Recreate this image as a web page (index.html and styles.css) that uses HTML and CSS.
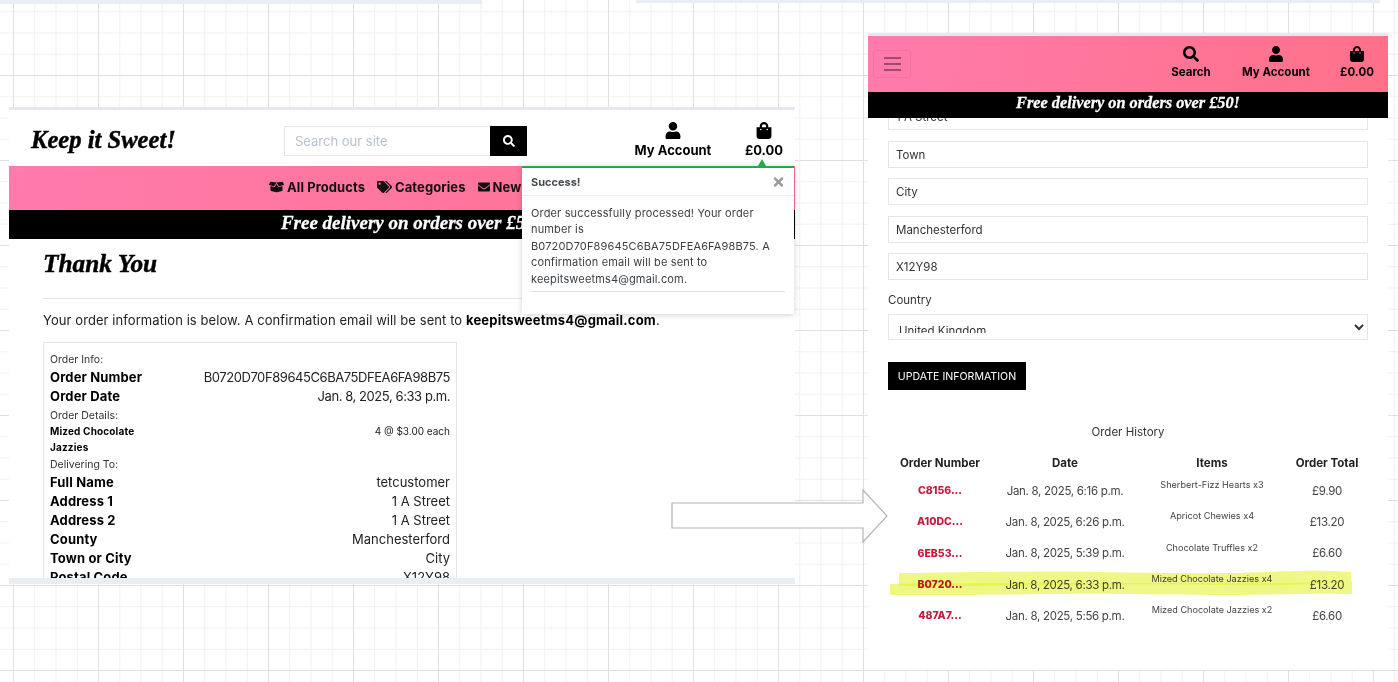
FILE: index.html
```html
<!DOCTYPE html>
<html lang="en">
<head>
<meta charset="utf-8">
<title>Keep it Sweet! order confirmation</title>
<link rel="stylesheet" href="styles.css">
</head>
<body>
<main class="canvas">
  <div class="strip strip-a"></div>
  <div class="strip strip-b"></div>

  <section class="window desktop">
    <header class="site-head">
      <div class="logo">Keep it Sweet!</div>
      <form class="search">
        <input class="search-input" placeholder="Search our site">
        <button class="search-btn" type="button"><svg viewBox="0 0 512 512"><path d="M505 442.7L405.3 343c-4.5-4.5-10.6-7-17-7H372c27.6-35.3 44-79.7 44-128C416 93.1 322.9 0 208 0S0 93.1 0 208s93.1 208 208 208c48.3 0 92.7-16.4 128-44v16.3c0 6.4 2.5 12.5 7 17l99.7 99.7c9.4 9.4 24.6 9.4 33.9 0l28.3-28.3c9.4-9.4 9.4-24.6.1-34zM208 336c-70.7 0-128-57.2-128-128 0-70.7 57.2-128 128-128 70.7 0 128 57.2 128 128 0 70.7-57.2 128-128 128z"/></svg></button>
      </form>
      <a class="head-link account"><svg viewBox="0 0 448 512"><path d="M224 256c70.7 0 128-57.3 128-128S294.7 0 224 0 96 57.3 96 128s57.3 128 128 128zm89.6 32h-16.7c-22.2 10.2-46.9 16-72.9 16s-50.6-5.8-72.9-16h-16.7C60.2 288 0 348.2 0 422.4V464c0 26.5 21.5 48 48 48h352c26.5 0 48-21.5 48-48v-41.6c0-74.2-60.2-134.4-134.4-134.4z"/></svg><span>My Account</span></a>
      <a class="head-link bag"><svg viewBox="0 0 448 512"><path d="M352 160v-32C352 57.42 294.579 0 224 0 153.42 0 96 57.42 96 128v32H0v272c0 44.183 35.817 80 80 80h288c44.183 0 80-35.817 80-80V160h-96zm-192-32c0-35.29 28.71-64 64-64s64 28.71 64 64v32H160v-32zm160 120c-13.255 0-24-10.745-24-24s10.745-24 24-24 24 10.745 24 24-10.745 24-24 24zm-192 0c-13.255 0-24-10.745-24-24s10.745-24 24-24 24 10.745 24 24-10.745 24-24 24z"/></svg><span>£0.00</span></a>
    </header>
    <nav class="main-nav">
      <a class="nav-item"><svg class="wide" viewBox="0 0 640 512"><path d="M425.7 256c-16.9 0-32.8-9-41.4-23.4L320 126l-64.2 106.6c-8.7 14.5-24.6 23.5-41.5 23.5-4.5 0-9-.6-13.3-1.9L64 215v178c0 14.7 10 27.5 24.2 31l216.2 54.1c10.2 2.5 20.9 2.5 31 0L551.8 424c14.2-3.6 24.2-16.4 24.2-31V215l-137 39.1c-4.3 1.3-8.8 1.9-13.3 1.9zm212.6-112.2L586.8 41c-3.1-6.2-9.8-9.8-16.7-8.9L320 64l91.7 152.1c3.8 6.3 11.4 9.3 18.5 7.3l197.9-56.5c9.9-2.9 14.7-13.9 10.2-23.1zM53.2 41L1.7 143.8c-4.6 9.2.3 20.2 10.1 23l197.9 56.5c7.1 2 14.7-1 18.5-7.3L320 64 69.8 32.1c-6.9-.8-13.5 2.7-16.6 8.9z"/></svg>All Products</a>
      <a class="nav-item"><svg class="wide" viewBox="0 0 640 512"><path d="M497.941 225.941L286.059 14.059A48 48 0 0 0 252.118 0H48C21.49 0 0 21.49 0 48v204.118a48 48 0 0 0 14.059 33.941l211.882 211.882c18.744 18.745 49.136 18.746 67.882 0l204.118-204.118c18.745-18.745 18.745-49.137 0-67.882zM112 160c-26.51 0-48-21.49-48-48s21.49-48 48-48 48 21.49 48 48-21.49 48-48 48zm513.941 133.823L421.823 497.941c-18.745 18.745-49.137 18.745-67.882 0l-.36-.36L527.64 323.522c16.999-16.999 26.36-39.6 26.36-63.64s-9.362-46.641-26.36-63.64L331.397 0h48.721a48 48 0 0 1 33.941 14.059l211.882 211.882c18.745 18.745 18.745 49.137 0 67.882z"/></svg>Categories</a>
      <a class="nav-item"><svg viewBox="0 0 512 512"><path d="M502.3 190.8c3.9-3.1 9.7-.2 9.7 4.7V400c0 26.5-21.5 48-48 48H48c-26.5 0-48-21.5-48-48V195.6c0-5 5.7-7.8 9.7-4.7 22.4 17.4 52.1 39.5 154.1 113.6 21.1 15.4 56.7 47.8 92.2 47.6 35.7.3 72-32.8 92.3-47.6 102-74.1 131.6-96.3 154-113.7zM256 320c23.2.4 56.6-29.2 73.4-41.4 132.7-96.3 142.8-104.7 173.4-128.7 5.8-4.5 9.2-11.5 9.2-18.9v-19c0-26.5-21.5-48-48-48H48C21.5 64 0 85.5 0 112v19c0 7.4 3.4 14.3 9.2 18.9 30.6 23.9 40.7 32.4 173.4 128.7 16.8 12.2 50.2 41.8 73.4 41.4z"/></svg>New</a>
    </nav>
    <div class="promo promo-desktop">Free delivery on orders over £50!</div>
    <div class="page">
      <h1 class="thanks">Thank You</h1>
      <hr class="rule">
      <p class="lead">Your order information is below. A confirmation email will be sent to <strong>keepitsweetms4@gmail.com</strong>.</p>
      <div class="receipt">
        <p class="r-label">Order Info:</p>
        <div class="r-row"><b>Order Number</b><span class="tight">B0720D70F89645C6BA75DFEA6FA98B75</span></div>
        <div class="r-row"><b>Order Date</b><span class="tight">Jan. 8, 2025, 6:33 p.m.</span></div>
        <p class="r-label">Order Details:</p>
        <div class="r-row r-small"><b>Mized Chocolate Jazzies</b><span>4 @ $3.00 each</span></div>
        <p class="r-label">Delivering To:</p>
        <div class="r-row"><b>Full Name</b><span>tetcustomer</span></div>
        <div class="r-row"><b>Address 1</b><span>1 A Street</span></div>
        <div class="r-row"><b>Address 2</b><span>1 A Street</span></div>
        <div class="r-row"><b>County</b><span>Manchesterford</span></div>
        <div class="r-row"><b>Town or City</b><span>City</span></div>
        <div class="r-row"><b>Postal Code</b><span>X12Y98</span></div>
      </div>
    </div>
    <div class="foot-band"></div>
  </section>

  <aside class="toast">
    <span class="toast-arrow"></span>
    <div class="toast-head"><strong>Success!</strong><svg viewBox="0 0 352 512"><path d="M242.72 256l100.07-100.07c12.28-12.28 12.28-32.19 0-44.48l-22.24-22.24c-12.28-12.28-32.19-12.28-44.48 0L176 189.28 75.93 89.21c-12.28-12.28-32.19-12.28-44.48 0L9.21 111.45c-12.28 12.28-12.28 32.19 0 44.48L109.28 256 9.21 356.07c-12.28 12.28-12.28 32.19 0 44.48l22.24 22.24c12.28 12.28 32.2 12.28 44.48 0L176 322.72l100.07 100.07c12.28 12.28 32.2 12.28 44.48 0l22.24-22.24c12.28-12.28 12.28-32.19 0-44.48L242.72 256z"/></svg></div>
    <div class="toast-body">
      <p>Order successfully processed! Your order number is B0720D70F89645C6BA75DFEA6FA98B75. A confirmation email will be sent to keepitsweetms4@gmail.com.</p>
      <hr class="toast-rule">
    </div>
  </aside>

  <section class="window mobile">
    <header class="m-head">
      <button class="burger" type="button"><i></i><i></i><i></i></button>
      <div class="m-links">
        <a class="m-link"><svg viewBox="0 0 512 512"><path d="M505 442.7L405.3 343c-4.5-4.5-10.6-7-17-7H372c27.6-35.3 44-79.7 44-128C416 93.1 322.9 0 208 0S0 93.1 0 208s93.1 208 208 208c48.3 0 92.7-16.4 128-44v16.3c0 6.4 2.5 12.5 7 17l99.7 99.7c9.4 9.4 24.6 9.4 33.9 0l28.3-28.3c9.4-9.4 9.4-24.6.1-34zM208 336c-70.7 0-128-57.2-128-128 0-70.7 57.2-128 128-128 70.7 0 128 57.2 128 128 0 70.7-57.2 128-128 128z"/></svg><span>Search</span></a>
        <a class="m-link"><svg viewBox="0 0 448 512"><path d="M224 256c70.7 0 128-57.3 128-128S294.7 0 224 0 96 57.3 96 128s57.3 128 128 128zm89.6 32h-16.7c-22.2 10.2-46.9 16-72.9 16s-50.6-5.8-72.9-16h-16.7C60.2 288 0 348.2 0 422.4V464c0 26.5 21.5 48 48 48h352c26.5 0 48-21.5 48-48v-41.6c0-74.2-60.2-134.4-134.4-134.4z"/></svg><span>My Account</span></a>
        <a class="m-link"><svg viewBox="0 0 448 512"><path d="M352 160v-32C352 57.42 294.579 0 224 0 153.42 0 96 57.42 96 128v32H0v272c0 44.183 35.817 80 80 80h288c44.183 0 80-35.817 80-80V160h-96zm-192-32c0-35.29 28.71-64 64-64s64 28.71 64 64v32H160v-32zm160 120c-13.255 0-24-10.745-24-24s10.745-24 24-24 24 10.745 24 24-10.745 24-24 24zm-192 0c-13.255 0-24-10.745-24-24s10.745-24 24-24 24 10.745 24 24-10.745 24-24 24z"/></svg><span>£0.00</span></a>
      </div>
    </header>
    <div class="promo promo-mobile">Free delivery on orders over £50!</div>
    <div class="m-page">
      <form class="m-form">
        <input class="field first" value="1 A Street">
        <input class="field" value="Town">
        <input class="field" value="City">
        <input class="field" value="Manchesterford">
        <input class="field" value="X12Y98">
        <label class="field-label" for="country">Country</label>
        <select class="field select" id="country"><option>United Kingdom</option></select>
        <button class="update" type="button">UPDATE INFORMATION</button>
      </form>
      <h2 class="history-title">Order History</h2>
      <div class="history">
        <div class="h-row h-head"><span>Order Number</span><span>Date</span><span>Items</span><span>Order Total</span></div>
        <div class="h-row"><a>C8156...</a><span>Jan. 8, 2025, 6:16 p.m.</span><small>Sherbert-Fizz Hearts x3</small><span>£9.90</span></div>
        <div class="h-row"><a>A10DC...</a><span>Jan. 8, 2025, 6:26 p.m.</span><small>Apricot Chewies x4</small><span>£13.20</span></div>
        <div class="h-row"><a>6EB53...</a><span>Jan. 8, 2025, 5:39 p.m.</span><small>Chocolate Truffles x2</small><span>£6.60</span></div>
        <div class="h-row"><a>B0720...</a><span>Jan. 8, 2025, 6:33 p.m.</span><small>Mized Chocolate Jazzies x4</small><span>£13.20</span></div>
        <div class="h-row"><a>487A7...</a><span>Jan. 8, 2025, 5:56 p.m.</span><small>Mized Chocolate Jazzies x2</small><span>£6.60</span></div>
      </div>
    </div>
  </section>

  <svg class="arrow" viewBox="0 0 218 54"><path d="M1 14H192V1L216 27 192 53V39H1Z"/></svg>

  <svg class="marker" viewBox="0 0 468 30"><path d="M11 5C70 4 150 3 210 4S330 6 380 4 440 3 463 4L463 13C420 17 390 18 340 17S230 16 160 17 50 18 11 18Z"/><path d="M2 16C60 15 120 15 210 15S300 15 400 15L464 13V26C420 25 390 27 340 27S230 25 160 26 50 27 2 27Z"/></svg>
</main>
</body>
</html>
```

FILE: styles.css
```css
* { box-sizing: border-box; }
html, body { margin: 0; height: 100%; }
body {
  font-family: Inter, "Noto Sans", sans-serif;
  color: #212529;
  overflow: hidden;
}
.canvas {
  position: relative;
  width: 1398px;
  height: 682px;
  overflow: hidden;
  background-color: #fff;
  background-image:
    linear-gradient(90deg, #dfdfdf 1px, transparent 1px),
    linear-gradient(#dfdfdf 1px, transparent 1px),
    linear-gradient(90deg, #f0f0f0 1px, transparent 1px),
    linear-gradient(#f0f0f0 1px, transparent 1px);
  background-size: 85px 85px, 85px 85px, 21.25px 21.25px, 21.25px 21.25px;
  background-position: 13px 0, 0 75px, 13px 0, 0 75px;
}
.strip { position: absolute; top: 0; height: 3px; background: #e9eef6; }
.strip-a { left: 0; width: 482px; height: 4px; }
.strip-b { left: 636px; width: 744px; }
.window { position: absolute; background: #fff; overflow: hidden; filter: blur(.3px); }

/* desktop page */
.desktop {
  left: 9px; top: 107px; width: 786px; height: 477px;
  border-top: 3px solid #e4e8f0;
  display: flex; flex-direction: column;
}
.site-head { flex: 0 0 56px; display: flex; align-items: flex-start; position: relative; }
.logo {
  font: italic 700 24.6px/1 "Liberation Serif", serif;
  -webkit-text-stroke: .45px #000;
  color: #000; margin: 18px 0 0 22px; width: 253px;
}
.search { display: flex; width: 243px; height: 30px; margin-top: 16px; }
.search-input {
  flex: 1; min-width: 0; border: 1px solid #e3e6ea; border-right: 0; padding: 0 10px;
  font: 13px Inter, sans-serif; outline: 0;
}
.search-input::placeholder { color: #b9c1cf; opacity: 1; }
.search-btn { width: 37px; border: 0; background: #000; padding: 0; display: flex; align-items: center; justify-content: center; }
.search-btn svg { width: 12px; height: 12px; fill: #fff; }
.head-link { display: flex; flex-direction: column; align-items: center; font-weight: 700; font-size: 13px; color: #000; margin-top: 12px; }
.head-link svg { height: 17px; width: 16px; fill: #000; margin-bottom: 3px; }
.head-link span { line-height: 16px; white-space: nowrap; }
.account { margin-left: 108px; width: 76px; }
.bag { margin-left: 35px; width: 36px; }

.main-nav {
  flex: 0 0 44px; display: flex; align-items: center; gap: 12px; padding: 0 0 2px 260px;
  background: linear-gradient(100deg, #ff7bac, #ff7090);
}
.nav-item { display: flex; align-items: center; gap: 3px; font-weight: 700; font-size: 13px; letter-spacing: .08px; color: #111; white-space: nowrap; }
.nav-item svg { width: 12px; height: 12px; fill: #111; }
.nav-item svg.wide { width: 15px; }

.promo {
  background: #000; color: #fff; text-align: center;
  font-family: "Liberation Serif", serif; font-style: italic; font-weight: 700;
  -webkit-text-stroke: .3px #fff;
}
.promo-desktop { flex: 0 0 29px; font-size: 19px; line-height: 25px; padding-left: 19px; }

.page { flex: 1; min-height: 0; padding: 0 0 0 34px; overflow: hidden; }
.thanks { margin: 9px 0 0; font: italic 700 25.3px/30px "Liberation Serif", serif; -webkit-text-stroke: .45px #000; color: #000; }
.rule { margin: 20px 0 0; border: 0; border-top: 1px solid #e2e4e8; }
.lead { margin: 12px 0 0; font-size: 13px; line-height: 18px; letter-spacing: .08px; color: #222; }
.lead strong { color: #000; letter-spacing: .2px; }
.receipt { width: 414px; margin-top: 13px; border: 1px solid #e3e5e8; padding: 8px 6px; }
.r-label { margin: 0; font-size: 10.5px; line-height: 17px; color: #333; }
.r-row { display: flex; justify-content: space-between; font-size: 13px; line-height: 19px; color: #222; }
.r-row b { color: #000; letter-spacing: .15px; }
.r-row + .r-label { margin-top: 1px; }
.r-row .tight { letter-spacing: -.43px; }
.r-label + .r-small { margin-top: -1px; }
.r-small { font-size: 10px; line-height: 16px; }
.r-small b { width: 100px; }
.foot-band { flex: 0 0 6px; background: #e9eef5; }

/* toast */
.toast {
  position: absolute; left: 522px; top: 166px; width: 272px; height: 148px;
  background: #fff; border-top: 2px solid #28a745;
  box-shadow: 0 1px 6px rgba(0,0,0,.18);
}
.toast-arrow {
  position: absolute; right: 28px; top: -9px;
  border: 4px solid transparent; border-top: 0; border-bottom: 7px solid #28a745;
}
.toast-head {
  display: flex; justify-content: space-between; align-items: center;
  height: 28px; padding: 0 10px 0 9px; border-bottom: 1px solid #f5e8ec;
  font-size: 11px; color: #454a50;
}
.toast-head svg { width: 11px; height: 14px; fill: #9a9a9a; }
.toast-body { padding: 9px 9px 0; font-size: 11px; line-height: 16.4px; letter-spacing: .15px; color: #3a3f44; filter: blur(.2px); }
.toast-body p { margin: 0; }
.toast-rule { margin: 4px 0 0; border: 0; border-top: 1px solid #dedfe2; }

.arrow { position: absolute; left: 671px; top: 489px; width: 218px; height: 54px; }
.arrow path { fill: #fff; stroke: #b4b4b4; stroke-width: 1.2; }

/* mobile page */
.mobile {
  left: 868px; top: 33px; width: 520px; height: 637px;
  border-top: 3px solid #e4e8f0;
  display: flex; flex-direction: column;
}
.m-head {
  flex: 0 0 56px; display: flex; align-items: flex-start; justify-content: space-between;
  background: linear-gradient(100deg, #ff7bac, #ff7088);
  padding: 14px 0 0 5px;
}
.burger {
  width: 38px; height: 28px; background: transparent; border: 1px solid rgba(0,0,0,.06); border-radius: 3px;
  display: flex; flex-direction: column; align-items: center; justify-content: center; gap: 4px; padding: 0;
}
.burger i { width: 17px; height: 2px; background: rgba(0,0,0,.38); }
.m-links { display: flex; margin-top: -4px; }
.m-link { display: flex; flex-direction: column; align-items: center; font-weight: 700; font-size: 11.5px; color: #000; }
.m-link svg { height: 16px; width: 16px; fill: #000; margin-bottom: 3px; }
.m-link span { line-height: 15px; white-space: nowrap; }
.m-link:nth-child(1) { width: 40px; margin-right: 31px; }
.m-link:nth-child(2) { width: 68px; margin-right: 31px; }
.m-link:nth-child(3) { width: 32px; margin-right: 15px; }
.promo-mobile { flex: 0 0 26px; font-size: 16.3px; line-height: 22px; position: relative; z-index: 1; }
.m-page { flex: 1; min-height: 0; overflow: hidden; padding: 0 20px; }
.m-form { display: block; margin-top: -15px; }
.field {
  display: block; width: 100%; height: 27px; margin-bottom: 10.5px; padding: 1px 7px 0;
  border: 1px solid #e3e6ea; background: #fff; border-radius: 0;
  font: 11.5px Inter, sans-serif; color: #333; outline: 0;
}
.field-label { display: block; margin-top: 12px; font-size: 11.5px; line-height: 16px; color: #333; }
.select { margin: 6px 0 0; padding: 8px 0 6px 6px; height: 26px; background: #fff; }
.update {
  display: block; margin-top: 22px; width: 138px; height: 28px; border: 0; background: #000; color: #fff;
  font: 10.6px Inter, sans-serif; padding: 0;
}
.history-title { margin: 34px 0 0; text-align: center; font-size: 11.5px; line-height: 16px; font-weight: 400; color: #333; }
.history { margin-top: 11px; }
.h-row {
  display: grid; grid-template-columns: 104px 146px 148px 82px;
  height: 31.3px; align-items: center; text-align: center; font-size: 11.5px; letter-spacing: -.3px; color: #444;
}
.h-head { font-weight: 700; font-size: 11.5px; letter-spacing: 0; color: #222; height: 24px; }
.h-row a { color: #c8193c; font-weight: 800; font-size: 10.5px; letter-spacing: 0; }
.h-row small { font-size: 9.1px; letter-spacing: 0; color: #444; transform: translateY(-6px); }

.marker { position: absolute; left: 888px; top: 568px; width: 468px; height: 30px; mix-blend-mode: multiply; }
.marker path { fill: #e4f22e; opacity: .58; }
```
